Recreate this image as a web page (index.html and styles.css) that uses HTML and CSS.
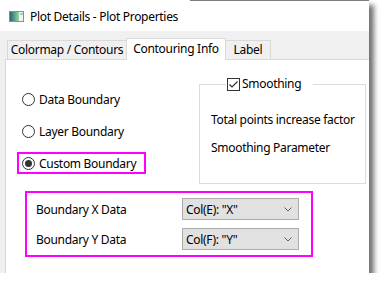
FILE: index.html
```html
<!DOCTYPE html>
<html lang="en">
<head>
  <meta charset="UTF-8">
  <title>Plot Details - Plot Properties</title>
  <link rel="stylesheet" href="styles.css">
</head>
<body>

<div class="window">
  <div class="edge"></div>
  <div class="titlebar">
    <svg class="app-icon" width="15" height="11" viewBox="0 0 15 11">
      <defs>
        <linearGradient id="icon-grad" x1="0" x2="1" y1="0" y2="0">
          <stop offset="0" stop-color="#2a6670"/>
          <stop offset="1" stop-color="#93d8a4"/>
        </linearGradient>
      </defs>
      <rect x="0.5" y="0.5" width="14" height="10" fill="#f3f3f3" stroke="#8d8d8d"/>
      <rect x="1" y="1" width="9" height="9" fill="url(#icon-grad)"/>
      <rect x="11" y="2" width="3" height="2" fill="#a9c9cf"/>
    </svg>
    <span>Plot Details - Plot Properties</span>
  </div>

  <div class="frame">
    <div class="tabs">
      <div class="tab tab-wide">Colormap / Contours</div>
      <div class="tab tab-active">Contouring Info</div>
      <div class="tab tab-small">Label</div>
    </div>

    <div class="page">
      <div class="top">
        <div class="radios">
          <label class="radio"><span class="circle"></span>Data Boundary</label>
          <label class="radio"><span class="circle"></span>Layer Boundary</label>
          <label class="radio highlight"><span class="circle checked"></span>Custom Boundary</label>
        </div>

        <fieldset class="group">
          <legend>
            <span class="checkbox">
              <svg width="11" height="11" viewBox="0 0 11 11"><polyline points="1.5,5.5 4,8 9.5,2.5" fill="none" stroke="#333" stroke-width="1.2"/></svg>
            </span>
            Smoothing
          </legend>
          <div class="group-row">Total points increase factor</div>
          <div class="group-row">Smoothing Parameter</div>
        </fieldset>
      </div>

      <div class="boundary">
        <div class="field">
          <span class="field-label">Boundary X Data</span>
          <div class="combo">
            <span>Col(E): "X"</span>
            <svg width="8" height="5" viewBox="0 0 8 5"><polyline points="0.5,0.5 4,4 7.5,0.5" fill="none" stroke="#606060"/></svg>
          </div>
        </div>
        <div class="field">
          <span class="field-label">Boundary Y Data</span>
          <div class="combo">
            <span>Col(F): "Y"</span>
            <svg width="8" height="5" viewBox="0 0 8 5"><polyline points="0.5,0.5 4,4 7.5,0.5" fill="none" stroke="#606060"/></svg>
          </div>
        </div>
      </div>
    </div>
  </div>
</div>

</body>
</html>
```

FILE: styles.css
```css
body {
  margin: 0;
  padding: 0;
  background: #fff;
  font-family: "Noto Sans", "Open Sans", sans-serif;
  font-size: 12px;
  letter-spacing: -0.3px;
  color: #000;
}
.window {
  width: 369px;
  height: 273px;
  background: #fff;
  box-shadow: 5px 5px 5px rgba(0, 0, 0, 0.55);
  display: flex;
  flex-direction: column;
  overflow: hidden;
}
.edge {
  height: 1px;
  margin-left: 190px;
  background: #7d7d7d;
}
.titlebar {
  height: 30px;
  display: flex;
  align-items: center;
  gap: 6px;
  padding-left: 9px;
}
.frame {
  flex: 1;
  background: #f0f0f0;
  padding-left: 5px;
  display: flex;
  flex-direction: column;
}
.tabs {
  height: 28px;
  display: flex;
  align-items: flex-end;
  padding-left: 2px;
}
.tab {
  box-sizing: border-box;
  height: 19px;
  line-height: 18px;
  border: 1px solid #d9d9d9;
  border-bottom: none;
  text-align: center;
  white-space: nowrap;
}
.tab-wide {
  width: 120px;
}
.tab-active {
  width: 100px;
  height: 22px;
  line-height: 19px;
  margin-left: -1px;
  margin-bottom: -1px;
  background: #fff;
  position: relative;
  z-index: 1;
}
.tab-small {
  width: 46px;
  margin-left: -1px;
}
.page {
  flex: 1;
  background: #fff;
  border-top: 1px solid #d9d9d9;
  border-left: 1px solid #d9d9d9;
}
.top {
  display: flex;
}
.radios {
  box-sizing: border-box;
  width: 193px;
  padding: 28px 0 0 11px;
  display: flex;
  flex-direction: column;
  align-items: flex-start;
  gap: 10px;
}
.radio {
  box-sizing: border-box;
  height: 22px;
  display: flex;
  align-items: center;
  gap: 4px;
  padding: 0 8px 0 3px;
  border: 2px solid transparent;
}
.radio.highlight {
  border-color: #ff00ff;
}
.circle {
  box-sizing: border-box;
  width: 13px;
  height: 13px;
  border: 1px solid #333;
  border-radius: 50%;
  display: flex;
  align-items: center;
  justify-content: center;
}
.circle.checked::after {
  content: "";
  width: 7px;
  height: 7px;
  border-radius: 50%;
  background: #333;
}
.group {
  box-sizing: border-box;
  width: 167px;
  height: 107px;
  margin: 17px 0 0 0;
  padding: 0 0 0 11px;
  border: 1px solid #dcdcdc;
}
.group legend {
  margin-left: 15px;
  padding: 0 12px 0 1px;
  line-height: 14px;
  display: flex;
  align-items: center;
  gap: 2px;
}
.checkbox {
  box-sizing: border-box;
  width: 13px;
  height: 13px;
  border: 1px solid #333;
  display: flex;
  align-items: center;
  justify-content: center;
}
.group-row {
  line-height: 16px;
  margin-top: 12px;
  white-space: nowrap;
}
.group-row:first-of-type {
  margin-top: 21px;
}
.boundary {
  box-sizing: border-box;
  width: 288px;
  margin: 7px 0 0 19px;
  padding: 5px 0 5px 9px;
  border: 2px solid #ff00ff;
  display: flex;
  flex-direction: column;
  gap: 8px;
}
.field {
  display: flex;
  align-items: center;
}
.field-label {
  width: 146px;
}
.combo {
  box-sizing: border-box;
  width: 117px;
  height: 22px;
  padding: 0 6px 0 3px;
  background: #e1e1e1;
  border: 1px solid #adadad;
  display: flex;
  align-items: center;
  justify-content: space-between;
}
```
